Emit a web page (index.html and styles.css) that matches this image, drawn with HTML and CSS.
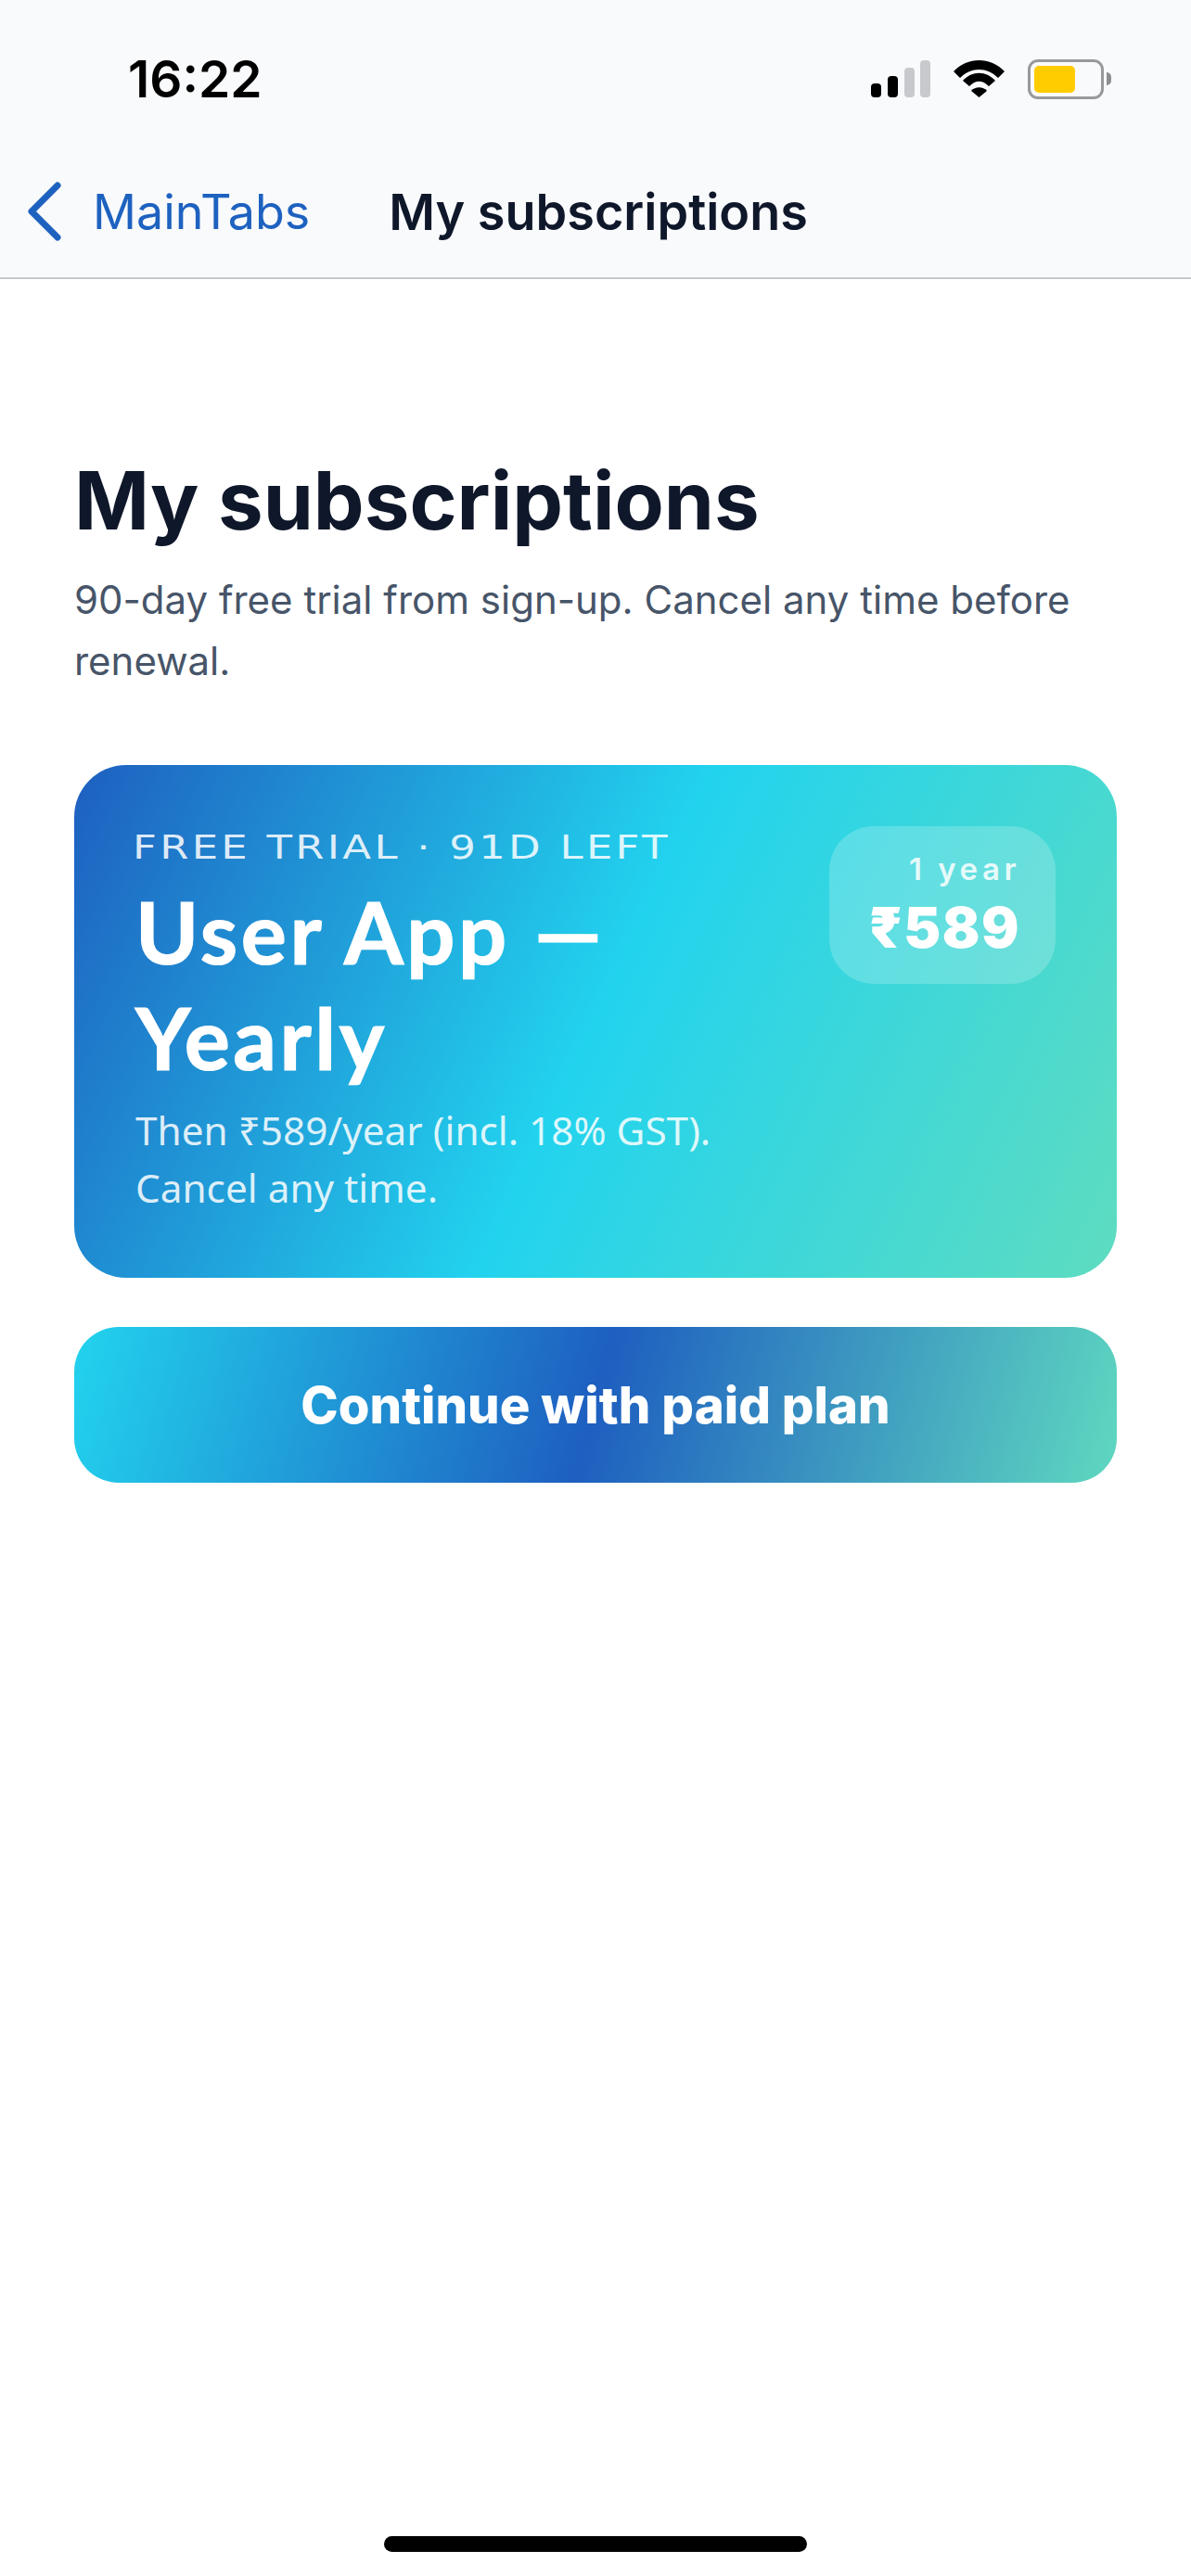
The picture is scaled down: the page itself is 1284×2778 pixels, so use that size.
FILE: index.html
```html
<!DOCTYPE html>
<html lang="en">
<head>
    <meta charset="UTF-8">
    <meta name="viewport" content="width=device-width, initial-scale=1.0">
    <title>My subscriptions</title>
    <link rel="stylesheet" href="styles.css">
</head>
<body>
    <div id="screen">
        <header id="top-bar">
            <div id="status-bar">
                <span id="clock">16:22</span>
                <div id="status-icons">
                    <svg class="signal" width="64" height="40" viewBox="0 0 64 40">
                        <rect x="0" y="25" width="11" height="15" rx="4" fill="#000"/>
                        <rect x="18" y="17" width="11" height="23" rx="4" fill="#000"/>
                        <rect x="36" y="8" width="11" height="32" rx="4" fill="#c8c9cc"/>
                        <rect x="53" y="0" width="11" height="40" rx="4" fill="#c8c9cc"/>
                    </svg>
                    <svg class="wifi" width="55" height="40" viewBox="0 0 55 40">
                        <path d="M0 12 C15 -4 40 -4 55 12 L48 19 C36 7 19 7 7 19 Z" fill="#000"/>
                        <path d="M10 22 C20 11 35 11 45 22 L38 28 C31 21 24 21 17 28 Z" fill="#000"/>
                        <path d="M19 33 C23 28 32 28 36 33 L27.5 40 Z" fill="#000"/>
                    </svg>
                    <div class="battery">
                        <div class="battery-body"><div class="battery-level"></div></div>
                        <div class="battery-cap"></div>
                    </div>
                </div>
            </div>
            <nav id="nav-bar">
                <a class="back" href="#">
                    <svg width="38" height="64" viewBox="0 0 38 64">
                        <path d="M33 4 L5 32 L33 60" fill="none" stroke="#1e62c0" stroke-width="7" stroke-linecap="round" stroke-linejoin="round"/>
                    </svg>
                    <span>MainTabs</span>
                </a>
                <span class="nav-title">My subscriptions</span>
            </nav>
        </header>

        <main id="content">
            <h1>My subscriptions</h1>
            <p class="intro">90-day free trial from sign-up. Cancel any time before renewal.</p>

            <section class="plan-card">
                <div class="plan-info">
                    <div class="plan-status">FREE TRIAL · 91D LEFT</div>
                    <h2>User App — Yearly</h2>
                    <p class="plan-note">Then ₹589/year (incl. 18% GST). Cancel any time.</p>
                </div>
                <div class="price-badge">
                    <span class="price-term">1 year</span>
                    <span class="price-amount">₹589</span>
                </div>
            </section>

            <button class="paid-button">Continue with paid plan</button>
        </main>

        <div id="home-bar"></div>
    </div>
</body>
</html>
```

FILE: styles.css
```css
* {
    box-sizing: border-box;
}
html, body {
    margin: 0;
    padding: 0;
}
body {
    font-family: Inter, "Noto Sans", sans-serif;
    background-color: #ffffff;
}
#screen {
    width: 1284px;
    height: 2778px;
    display: flex;
    flex-direction: column;
    overflow: hidden;
}
#top-bar {
    background-color: #f9fafc;
    border-bottom: 2px solid #c8c8ca;
    height: 301px;
}
#status-bar {
    height: 172px;
    padding: 64px 0 0 138px;
    display: flex;
    justify-content: space-between;
    align-items: flex-start;
}
#clock {
    font-size: 55px;
    line-height: 42px;
    font-weight: 600;
    color: #000;
}
#status-icons {
    display: flex;
    align-items: center;
    gap: 25px;
    padding-right: 86px;
    height: 42px;
}
.battery {
    display: flex;
    align-items: center;
    gap: 3px;
}
.battery-body {
    width: 82px;
    height: 43px;
    border: 3px solid #98999b;
    border-radius: 11px;
    padding: 4px;
}
.battery-level {
    width: 44px;
    height: 29px;
    background-color: #ffcc00;
    border-radius: 5px;
}
.battery-cap {
    width: 5px;
    height: 14px;
    background-color: #8e8e90;
    border-radius: 0 7px 7px 0;
}
#nav-bar {
    display: flex;
    align-items: center;
    padding-left: 29px;
    height: 112px;
}
.back {
    display: flex;
    align-items: center;
    gap: 33px;
    color: #1e62c0;
    text-decoration: none;
    font-size: 52px;
    margin-right: 85px;
}
.nav-title {
    font-size: 54px;
    font-weight: 600;
    color: #0f172a;
}
#content {
    flex: 1;
    padding: 189px 80px 0;
}
h1 {
    margin: 0;
    font-size: 87px;
    line-height: 100px;
    font-weight: 700;
    color: #0f172a;
}
.intro {
    margin: 24px 0 0;
    font-size: 42px;
    line-height: 66px;
    color: #475569;
}
.plan-card {
    margin-top: 79px;
    height: 553px;
    padding: 66px;
    border-radius: 56px;
    background: linear-gradient(115deg, #1e5fc0 0%, #22d3ee 50%, #5edcc0 100%);
    display: flex;
    justify-content: space-between;
    align-items: flex-start;
    color: #fff;
}
.plan-info {
    width: 640px;
}
.plan-status {
    font-family: "DejaVu Sans", sans-serif;
    font-size: 36px;
    line-height: 46px;
    letter-spacing: 2.6px;
    white-space: nowrap;
    color: rgba(255,255,255,0.85);
    transform: scaleX(1.25);
    transform-origin: left;
    margin-left: -3px;
}
h2 {
    margin: 11px 0 0;
    font-family: Lato, sans-serif;
    font-size: 92px;
    line-height: 114px;
    font-weight: 700;
    letter-spacing: 3.5px;
    -webkit-text-stroke: 1.2px #fff;
    width: 560px;
}
.plan-note {
    margin: 12px 0 0;
    font-family: "Noto Sans", sans-serif;
    font-size: 42.3px;
    line-height: 62px;
    color: rgba(255,255,255,0.85);
}
.price-badge {
    width: 244px;
    height: 170px;
    flex-shrink: 0;
    border-radius: 48px;
    background-color: rgba(255,255,255,0.2);
    padding: 28px 38px;
    display: flex;
    flex-direction: column;
    align-items: flex-end;
}
.price-term {
    font-size: 33px;
    line-height: 36px;
    font-weight: 600;
    letter-spacing: 4.5px;
    color: rgba(255,255,255,0.85);
}
.price-amount {
    margin-top: 12px;
    font-size: 60px;
    line-height: 66px;
    font-weight: 900;
    letter-spacing: 1.5px;
}
.paid-button {
    display: block;
    width: 100%;
    height: 168px;
    margin-top: 53px;
    border: none;
    border-radius: 48px;
    background: linear-gradient(105deg, #22d3ee 0%, #1e5fc0 50%, #5fd8c0 100%);
    color: #fff;
    font-family: Inter, sans-serif;
    font-size: 54.5px;
    font-weight: 800;
}
#home-bar {
    width: 456px;
    height: 17px;
    border-radius: 9px;
    background-color: #000;
    margin: 0 auto 26px;
}
```
